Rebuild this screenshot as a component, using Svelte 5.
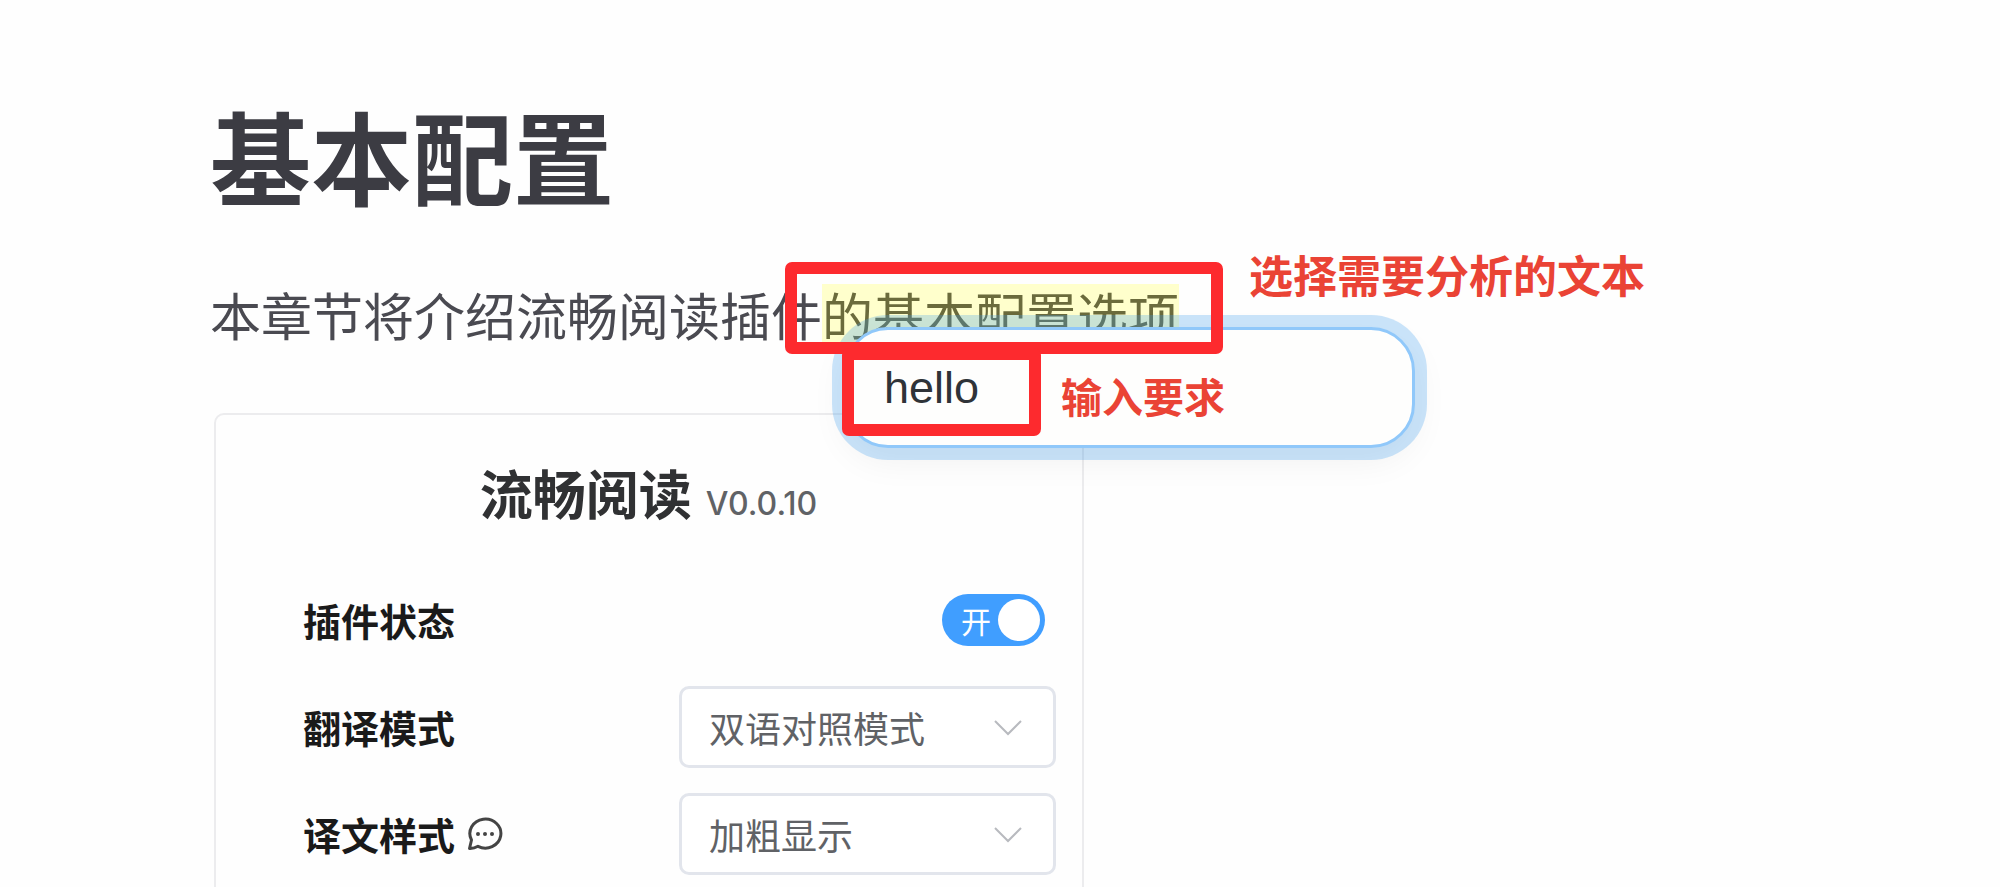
<script lang="ts">
	let enabled: boolean = true;
	let request: string = 'hello';
	let mode: string = 'bilingual';
	let textStyle: string = 'bold';

	const modes = [
		{ value: 'bilingual', label: '双语对照模式' },
		{ value: 'single', label: '仅译文模式' }
	];

	const textStyles = [
		{ value: 'bold', label: '加粗显示' },
		{ value: 'default', label: '默认样式' }
	];
</script>

<main class="page">
	<h1>基本配置</h1>
	<p class="intro">本章节将介绍流畅阅读插件<mark>的基本配置选项</mark></p>

	<section class="card">
		<header class="card-header">
			<h2>流畅阅读</h2>
			<span class="version">V0.0.10</span>
		</header>

		<div class="rows">
			<div class="row">
				<label for="enabled">插件状态</label>
				<span class="switch">
					<input id="enabled" type="checkbox" role="switch" bind:checked={enabled} />
					<span class="switch-text">{enabled ? '开' : '关'}</span>
					<span class="knob"></span>
				</span>
			</div>

			<div class="row">
				<label for="mode">翻译模式</label>
				<span class="select">
					<select id="mode" bind:value={mode}>
						{#each modes as item}
							<option value={item.value}>{item.label}</option>
						{/each}
					</select>
					<svg class="arrow" viewBox="0 0 30 18" aria-hidden="true">
						<path d="M2 2 L15 15 L28 2" />
					</svg>
				</span>
			</div>

			<div class="row">
				<label for="textStyle">
					译文样式
					<svg class="tip" viewBox="0 0 36 34" aria-hidden="true">
						<path d="M2.5 31.5 L4.5 23 A15.5 14.5 0 1 1 11 29.3 Q7 31.7 2.5 31.5 Z" />
						<circle cx="11" cy="17" r="2" />
						<circle cx="18" cy="17" r="2" />
						<circle cx="25" cy="17" r="2" />
					</svg>
				</label>
				<span class="select">
					<select id="textStyle" bind:value={textStyle}>
						{#each textStyles as item}
							<option value={item.value}>{item.label}</option>
						{/each}
					</select>
					<svg class="arrow" viewBox="0 0 30 18" aria-hidden="true">
						<path d="M2 2 L15 15 L28 2" />
					</svg>
				</span>
			</div>
		</div>
	</section>

	<!-- floating prompt over the selected text -->
	<input class="prompt" type="text" aria-label="输入要求" bind:value={request} />

	<!-- annotations -->
	<div class="frame frame-selection"></div>
	<div class="frame frame-input"></div>
	<span class="note note-selection">选择需要分析的文本</span>
	<span class="note note-input">输入要求</span>
</main>

<style>
	:global(body) {
		background: #fefefe;
	}
	.page {
		position: relative;
		box-sizing: border-box;
		height: 100vh;
		padding: 90px 210px 0;
		overflow: hidden;
		font-family: 'Noto Sans CJK SC', sans-serif;
		color: #3c3c43;
	}
	h1 {
		margin: 0 0 56px;
		font-size: 101px;
		line-height: 128px;
		font-weight: 700;
	}
	.intro {
		margin: 0 0 59px;
		font-size: 51px;
		line-height: 80px;
		color: #4a4a51;
		white-space: nowrap;
	}
	mark {
		display: inline-block;
		line-height: 60px;
		background: #ffffcc;
		color: #6b6b3c;
	}

	.card {
		box-sizing: border-box;
		max-width: 870px;
		margin-left: 4px;
		padding: 37px 26px 80px 87px;
		border: 2px solid #ececee;
		border-radius: 10px;
	}
	.card-header {
		display: flex;
		justify-content: center;
		align-items: baseline;
		gap: 14px;
		margin: 0 62px 47px 0;
		color: #303133;
	}
	h2 {
		margin: 0;
		font-size: 53px;
		line-height: 80px;
		font-weight: 700;
	}
	.version {
		font-family: Inter, sans-serif;
		font-size: 32px;
		font-weight: 500;
		color: #606266;
	}
	.rows {
		display: flex;
		flex-direction: column;
		gap: 25px;
	}
	.row {
		display: flex;
		justify-content: space-between;
		align-items: center;
		height: 82px;
	}
	.row label {
		display: flex;
		align-items: center;
		gap: 12px;
		font-size: 38px;
		line-height: 60px;
		font-weight: 700;
		color: #1a1a1a;
	}
	.tip {
		width: 36px;
		height: 34px;
	}
	.tip path {
		fill: none;
		stroke: #444;
		stroke-width: 3;
		stroke-linejoin: round;
	}
	.tip circle {
		fill: #444;
	}

	.switch {
		position: relative;
		display: flex;
		align-items: center;
		justify-content: space-between;
		box-sizing: border-box;
		width: 103px;
		height: 52px;
		margin-right: 11px;
		padding: 0 5px 0 19px;
		border-radius: 26px;
		background: #409eff;
	}
	.switch input {
		position: absolute;
		inset: 0;
		width: 100%;
		height: 100%;
		margin: 0;
		opacity: 0;
		cursor: pointer;
	}
	.switch-text {
		font-size: 30px;
		line-height: 48px;
		color: #fff;
	}
	.knob {
		width: 42px;
		height: 42px;
		border-radius: 50%;
		background: #fff;
	}

	.select {
		position: relative;
		width: 377px;
	}
	.select select {
		display: block;
		box-sizing: border-box;
		width: 100%;
		height: 82px;
		padding: 0 80px 0 27px;
		border: 3px solid #e2e5ec;
		border-radius: 10px;
		background: #fff;
		appearance: none;
		font-family: inherit;
		font-size: 36px;
		color: #606266;
	}
	.arrow {
		position: absolute;
		top: 33px;
		right: 33px;
		width: 30px;
		height: 18px;
		pointer-events: none;
	}
	.arrow path {
		fill: none;
		stroke: #b8babf;
		stroke-width: 2;
	}

	.prompt {
		position: absolute;
		top: 327px;
		left: 844px;
		box-sizing: border-box;
		width: 571px;
		height: 121px;
		padding: 0 37px;
		border: 3px solid #90c8fa;
		border-radius: 44px;
		outline: none;
		background: #fefefd;
		box-shadow:
			0 0 0 12px rgba(64, 158, 240, 0.27),
			0 12px 36px rgba(0, 0, 0, 0.06);
		font-family: 'Liberation Sans', sans-serif;
		font-size: 45px;
		color: #2f3338;
	}

	.frame {
		position: absolute;
		box-sizing: border-box;
		border: 12px solid #fd2a2e;
		border-radius: 7px;
		pointer-events: none;
	}
	.frame-selection {
		top: 262px;
		left: 785px;
		width: 438px;
		height: 92px;
	}
	.frame-input {
		top: 348px;
		left: 842px;
		width: 199px;
		height: 88px;
	}
	.note {
		position: absolute;
		line-height: 60px;
		font-weight: 700;
		color: #ea4335;
		white-space: nowrap;
	}
	.note-selection {
		top: 244px;
		left: 1249px;
		font-size: 44px;
	}
	.note-input {
		top: 365px;
		left: 1061px;
		font-size: 41px;
	}
</style>
